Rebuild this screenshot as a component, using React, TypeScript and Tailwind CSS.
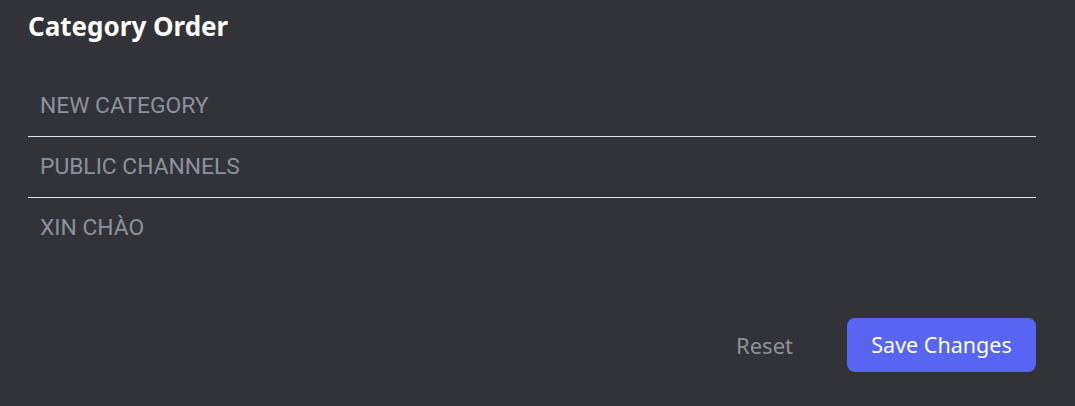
const categories = ["NEW CATEGORY", "PUBLIC CHANNELS", "XIN CHÀO"];

export default function App() {
  return (
    <div className="w-[1075px] h-[406px] bg-[#313338] pl-7 pr-[39px] pt-[7px] font-['Noto_Sans',sans-serif]">
      <h2 className="text-[26px] leading-[38px] font-bold text-white">Category Order</h2>
      <div className="mt-[31px] flex flex-col">
        {categories.map((name, i) => (
          <div
            key={name}
            className={`h-[61px] flex items-center pl-3 font-['Roboto',sans-serif] text-[22.8px] text-[#8c929b] ${
              i < categories.length - 1 ? "border-b border-[#e3e5e8]" : ""
            }`}
          >
            {name}
          </div>
        ))}
      </div>
      <div className="mt-[59px] flex justify-end items-center">
        <button className="h-[54px] px-6 mr-[30px] text-[22px] text-[#8e9297]">Reset</button>
        <button className="h-[54px] w-[189px] rounded-lg bg-[#5865f2] text-[21.5px] text-white">Save Changes</button>
      </div>
    </div>
  );
}
